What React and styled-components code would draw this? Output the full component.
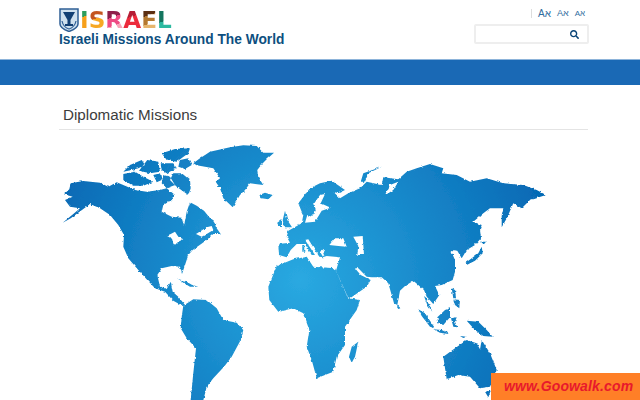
import React from "react";
import styled, { createGlobalStyle } from "styled-components";
import { FaSearch } from "react-icons/fa";

const GlobalStyle = createGlobalStyle`
  html, body {
    margin: 0;
    height: 400px;
    overflow: hidden;
    background: #fff;
    font-family: "Liberation Sans", Arial, sans-serif;
  }
`;

// outlines traced from the reference crops, each list with the offset of its crop (3x)
const shapeGroups = [
  {
    ox: 50,
    oy: 140,
    shapes: [
      // north america
      "42,163 58,148 62,130 100,123 150,128 175,140 200,127 225,137 255,150 290,155 330,150 350,145 375,165 365,180 340,195 335,215 365,230 395,233 402,258 410,215 420,187 440,197 462,212 478,232 492,242 498,262 512,282 490,282 470,300 445,318 428,330 415,345 405,375 396,402 390,380 365,378 335,385 322,405 330,440 350,447 362,425 368,455 385,470 405,495 398,498 370,482 345,455 315,445 292,420 265,390 235,355 220,320 222,285 205,255 180,225 150,205 120,192 100,207 62,235 38,248 70,222 90,205 60,200 45,180 68,170",
      // great lakes, st lawrence
      "350,287 362,282 375,275 385,290 400,298 385,305 372,317 366,296",
      "438,282 470,262 485,258 490,270 470,282 455,290",
      // greenland
      "430,70 450,55 480,35 540,22 580,16 620,18 640,38 672,38 650,58 636,72 622,90 625,112 640,135 600,130 585,150 570,165 548,202 520,175 510,145 497,125 510,115 490,85 440,76",
      // iceland
      "628,165 645,158 668,165 655,178 635,175",
      // south america
      "400,497 430,478 470,480 500,505 520,540 560,548 580,570 572,600 545,650 522,680 490,715 470,740 455,800 420,800 430,700 438,625 410,595 392,565 395,530",
      // caribbean
      "385,418 405,422 425,434 445,440 420,440 400,428",
    ],
  },
  {
    ox: 60,
    oy: 145,
    shapes: [
      // arctic islands
      "190,80 210,60 245,45 255,60 235,70 215,75",
      "190,87 225,80 250,95 280,110 250,122 220,122 190,105",
      "237,77 262,45 295,50 300,80 270,85",
      "280,90 300,85 305,105 290,112",
      "340,85 365,85 390,105 392,130 385,150 350,125 330,105",
      "305,25 345,12 390,10 385,25 350,50 320,45",
      "302,55 340,55 350,70 320,85 305,75",
      "310,90 330,95 345,120 320,130 305,115",
      "360,45 385,40 395,60 375,72 355,65",
    ],
  },
  {
    ox: 270,
    oy: 140,
    shapes: [
      // eurasia
      "25,312 60,308 50,290 55,272 95,250 100,225 95,215 85,190 120,145 150,130 185,122 225,150 205,160 190,155 210,175 235,160 270,145 290,125 335,135 340,112 385,118 410,95 440,85 480,72 520,85 515,100 560,105 600,125 650,115 700,130 760,135 800,150 828,165 780,180 755,205 730,190 712,232 695,262 695,225 700,205 660,205 640,220 610,245 635,255 630,270 633,295 615,315 590,330 575,355 562,332 542,330 555,360 555,395 548,420 515,435 495,438 508,465 490,492 470,470 462,450 445,435 430,422 405,438 390,452 382,495 372,490 355,430 335,412 305,412 290,410 265,385 255,385 272,405 302,420 290,440 240,475 232,470 198,392 210,352 170,348 158,352 165,325 150,335 160,352 148,350 115,298 105,300 125,330 135,345 125,345 105,312 80,312 62,330 50,352 27,345",
      // baltic, black sea, caspian, arctic inlet
      "150,165 165,162 152,190 182,203 155,212 135,245 105,248 112,225 125,230 137,212 133,190",
      "178,315 195,295 220,295 230,320 205,318",
      "250,290 278,288 282,345 262,345 265,318",
      "345,165 360,135 385,125 370,150 355,160",
      // africa
      "-5,440 20,378 70,358 110,350 130,380 195,385 235,475 270,480 260,510 225,560 225,615 200,650 190,695 140,715 125,660 110,620 118,570 100,520 70,505 25,515 -2,480",
      // madagascar
      "237,650 245,620 265,605 255,650 245,668",
      // britain and ireland
      "38,240 45,212 52,240 66,262 42,262",
      "22,248 36,238 36,258 24,258",
      // novaya zemlya, sardinia
      "272,125 280,100 335,80 295,100 285,125",
      "97,315 103,315 103,335 97,335",
      // australia, tasmania
      "520,650 555,625 590,600 620,610 630,628 635,600 660,640 680,690 660,740 630,745 600,710 565,705 530,718",
      "645,755 662,752 655,772",
      "382,495 392,505 382,508",
    ],
  },
  {
    ox: 400,
    oy: 230,
    shapes: [
      // japan
      "195,100 215,85 235,70 245,50 248,70 225,92 200,105",
      "240,35 258,35 250,45",
      // south east asia
      "72,198 80,205 97,245 82,225",
      "55,238 75,250 105,295 90,290 65,258",
      "112,262 135,240 150,235 150,262 130,285 115,280",
      "100,298 125,300 150,312 120,308",
      "153,265 170,262 165,275 172,292 160,290",
      "155,175 165,180 168,205 160,205",
      "160,208 180,210 178,235 165,225",
      "200,272 235,275 260,300 278,320 250,318 225,300",
      "180,318 200,320 190,324",
    ],
  },
];

const toPath = (points, ox, oy) =>
  "M" +
  points
    .split(" ")
    .map((pair) => {
      const [x, y] = pair.split(",").map(Number);
      return `${(x / 3 + ox).toFixed(1)} ${(y / 3 + oy - 130).toFixed(1)}`;
    })
    .join("L") +
  "Z";

const landPath = shapeGroups
  .map(({ ox, oy, shapes }) => shapes.map((points) => toPath(points, ox, oy)).join(""))
  .join("");

const logoLetters = [
  { char: "I", colors: "#2e9d5c 0 38%, #f6a01c 38% 100%" },
  { char: "S", colors: "#c4551f 0 45%, #f7a823 45% 100%" },
  { char: "R", colors: "#8e1f4a 0 40%, #ee4a84 40% 70%, #f7a3b8 70% 100%" },
  { char: "A", colors: "#b51e35 0 40%, #ec2b3c 40% 100%" },
  { char: "E", colors: "#5c2f12 0 35%, #b5792f 35% 65%, #e6b56d 65% 100%" },
  { char: "L", colors: "#14755f 0 55%, #2cb9a0 55% 100%" },
];

const Page = styled.div`
  width: 640px;
  height: 400px;
  overflow: hidden;
  position: relative;
`;

const Header = styled.header`
  height: 59px;
  box-sizing: border-box;
  padding: 8px 51px 0 59px;
  display: flex;
  justify-content: space-between;
`;

const Brand = styled.div`
  display: flex;
  flex-direction: column;
`;

const LogoRow = styled.div`
  display: flex;
  align-items: center;
  height: 23px;
`;

const Wordmark = styled.div`
  display: flex;
  font-family: "DejaVu Sans", sans-serif;
  font-weight: 700;
  font-size: 23.2px;
  line-height: 23px;
`;

const LogoLetter = styled.span`
  background: linear-gradient(160deg, ${(p) => p.$colors});
  -webkit-background-clip: text;
  background-clip: text;
  color: transparent;
`;

const SiteTitle = styled.h1`
  margin: 0;
  font-size: 13.75px;
  line-height: 17px;
  font-weight: 700;
  color: #0d4f80;
  white-space: nowrap;
`;

const Tools = styled.div`
  display: flex;
  flex-direction: column;
  align-items: flex-end;
  gap: 6px;
  padding-top: 1px;
`;

const FontSizes = styled.div`
  display: flex;
  align-items: center;
  gap: 6px;
  height: 9px;
  margin-right: 4px;
  padding-left: 6px;
  border-left: 1px solid #ddd;
`;

const FontSizeOption = styled.span`
  font-size: ${(p) => p.$size}px;
  line-height: 9px;
  color: #2f6c9e;
`;

const SearchBox = styled.div`
  width: 115px;
  height: 20px;
  box-sizing: border-box;
  border: 2px solid #eeeeee;
  border-radius: 2px;
  display: flex;
  align-items: center;
  justify-content: flex-end;
  padding-right: 8px;
  color: #0a4477;
  font-size: 9px;
`;

const Band = styled.div`
  height: 26px;
  background: #1a69b5;
  border-top: 1px solid #8db4da;
  box-sizing: border-box;
`;

const Main = styled.main`
  padding: 0 52px 0 59px;
`;

const SectionTitle = styled.h2`
  margin: 0;
  height: 45px;
  box-sizing: border-box;
  padding: 21px 0 0 4px;
  font-size: 15.2px;
  line-height: 18px;
  font-weight: 400;
  color: #3c3c3c;
  border-bottom: 1px solid #e4e4e4;
`;

const MapSvg = styled.svg`
  display: block;
  margin-left: -59px;
  width: 640px;
  height: 270px;
`;

const Badge = styled.div`
  position: absolute;
  right: 0;
  bottom: 0;
  width: 149px;
  height: 27px;
  background: #ff7f27;
  color: #e8192c;
  font-size: 14px;
  font-weight: 700;
  font-style: italic;
  line-height: 27px;
  padding-left: 13px;
  box-sizing: border-box;
  letter-spacing: 0.15px;
  white-space: nowrap;
`;

const Emblem = () => (
  <svg width="21" height="24" viewBox="0 0 21 24">
    <path d="M1 1H19V16C19 20 14 22 10 23.500C6 22 1 20 1 16Z" fill="#cfe0ee" stroke="#2f5f95" strokeWidth="1.500" />
    <path d="M4 4H16L11.500 12V16H14V18H6V16H8.500V12Z" fill="#123f73" />
    <path d="M3 13C4 18 7 20 10 21C13 20 16 18 17 13" fill="none" stroke="#2f5f95" strokeWidth="1.200" />
  </svg>
);

const WorldMap = () => (
  <MapSvg viewBox="0 0 640 270">
    <defs>
      <radialGradient id="land" gradientUnits="userSpaceOnUse" cx="300" cy="150" r="260">
        <stop offset="0" stopColor="#2aa9e1" />
        <stop offset="1" stopColor="#0568b4" />
      </radialGradient>
      <filter id="coast" filterUnits="userSpaceOnUse" x="0" y="0" width="640" height="270">
        <feTurbulence type="fractalNoise" baseFrequency="0.3" numOctaves="2" seed="4" />
        <feDisplacementMap in="SourceGraphic" scale="2.800" xChannelSelector="R" yChannelSelector="G" />
        <feGaussianBlur stdDeviation="0.3" />
      </filter>
    </defs>
    <path fill="url(#land)" fillRule="evenodd" filter="url(#coast)" d={landPath} />
  </MapSvg>
);

const App = () => (
  <Page>
    <GlobalStyle />
    <Header>
      <Brand>
        <LogoRow>
          <Emblem />
          <Wordmark>
            {logoLetters.map(({ char, colors }) => (
              <LogoLetter key={char} $colors={colors}>
                {char}
              </LogoLetter>
            ))}
          </Wordmark>
        </LogoRow>
        <SiteTitle>Israeli Missions Around The World</SiteTitle>
      </Brand>
      <Tools>
        <FontSizes>
          <FontSizeOption $size={10}>Aא</FontSizeOption>
          <FontSizeOption $size={9}>Aא</FontSizeOption>
          <FontSizeOption $size={8}>Aא</FontSizeOption>
        </FontSizes>
        <SearchBox>
          <FaSearch />
        </SearchBox>
      </Tools>
    </Header>
    <Band />
    <Main>
      <SectionTitle>Diplomatic Missions</SectionTitle>
      <WorldMap />
    </Main>
    <Badge>www.Goowalk.com</Badge>
  </Page>
);

export default App;
